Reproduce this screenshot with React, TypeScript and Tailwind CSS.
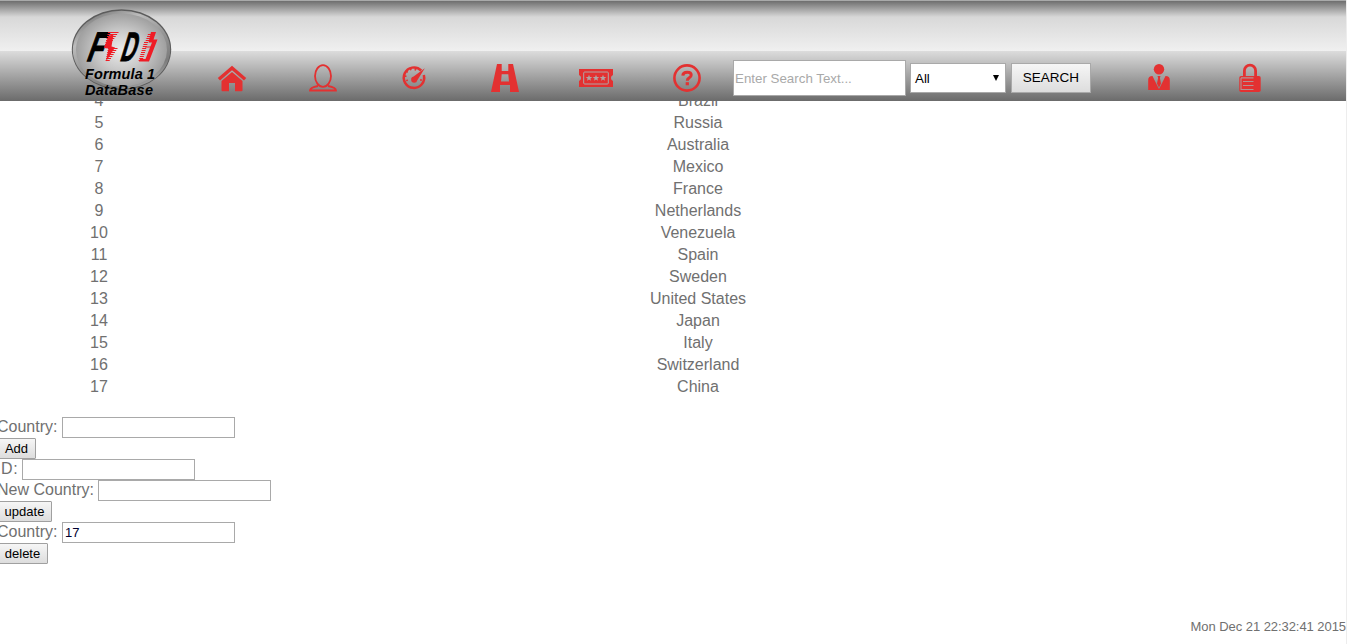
import React from "react";

const countries: [number, string][] = [
  [4, "Brazil"], [5, "Russia"], [6, "Australia"], [7, "Mexico"], [8, "France"],
  [9, "Netherlands"], [10, "Venezuela"], [11, "Spain"], [12, "Sweden"],
  [13, "United States"], [14, "Japan"], [15, "Italy"], [16, "Switzerland"], [17, "China"],
];

const redStripes = [0, 1, 2, 3, 4, 5, 6, 7, 8, 9, 10, 11, 12, 13, 14];

function Logo() {
  return (
    <svg width="102" height="101" viewBox="71 0 102 101" className="block shrink-0">
      <defs>
        <radialGradient id="face" cx="0.5" cy="0.5" r="0.52">
          <stop offset="0" stopColor="#ececec" />
          <stop offset="0.5" stopColor="#cacaca" />
          <stop offset="1" stopColor="#9c9c9c" />
        </radialGradient>
        <linearGradient id="rim" x1="0.2" y1="0" x2="0.8" y2="1">
          <stop offset="0" stopColor="#747474" />
          <stop offset="0.25" stopColor="#bcbcbc" />
          <stop offset="0.5" stopColor="#999" />
          <stop offset="0.8" stopColor="#7c7c7c" />
          <stop offset="1" stopColor="#b0b0b0" />
        </linearGradient>
      </defs>
      <ellipse cx="121.5" cy="49.5" rx="49.7" ry="40.2" fill="#5c5c5c" />
      <ellipse cx="121.5" cy="49.8" rx="48.7" ry="39" fill="url(#rim)" />
      <ellipse cx="121.5" cy="50" rx="45.5" ry="36.5" fill="url(#face)" />
      <g fontFamily="Liberation Sans, sans-serif" fontWeight="700" fill="#000">
        <text transform="translate(85.5 61.4) skewX(-20)" fontSize="41" textLength="15" lengthAdjust="spacingAndGlyphs" stroke="#000" strokeWidth="1.4">F</text>
        <text transform="translate(119 61.4) skewX(-17)" fontSize="41" textLength="15" lengthAdjust="spacingAndGlyphs" stroke="#000" strokeWidth="1">D</text>
        <text x="85" y="79" fontSize="14.5" fontStyle="italic" textLength="70">Formula 1</text>
        <text x="85" y="95" fontSize="14.5" fontStyle="italic" textLength="68">DataBase</text>
      </g>
      <g fill="#ef1c25">
        {redStripes.slice(0, 8).map((i) => (
          <rect key={i} x={108 - i * 0.5} y={32 + i * 2} width={10.5 - i * 0.9} height="1" />
        ))}
        {redStripes.slice(8).map((i) => (
          <rect key={i} x={108 - (i - 8) * 0.4} y={32 + i * 2} width={9.5 - (i - 8) * 0.9} height="1" />
        ))}
        <path d="M108.5 36 L113.5 34 L111.5 46.5 L115 47.5 L106 61.5 L108.5 48.5 L104 48 Z" />
        <path d="M151 32 H156 L153.5 39.5 H157.5 L149 61.5 H139 L140 59 H145.5 L152 42.5 H148.5 Z" />
        {redStripes.slice(1, 5).map((i) => (
          <rect key={i} x={148.5 - i * 0.7} y={32 + i * 2} width="5" height="1" />
        ))}
        {redStripes.slice(5).map((i) => (
          <rect key={i} x={147 - i * 0.6} y={32 + i * 2} width="4" height="1" />
        ))}
        <rect x="145" y="46.5" width="6" height="1" />
      </g>
    </svg>
  );
}

function Icon({ name }: { name: string }) {
  return (
    <svg width="36" height="30" viewBox="0 0 36 30" className="block" fill="#e33131">
      {name === "home" && (
        <>
          <path d="M3.8 15 L18 2.7 L32.2 15 L30 17.4 L18 7.2 L6 17.4 Z" />
          <path d="M7.5 18 L18 9 L28.5 18 V27.2 Q28.5 28.2 27.5 28.2 H21 V20 H15 V28.2 H8.5 Q7.5 28.2 7.5 27.2 Z" />
        </>
      )}
      {name === "person" && (
        <g fill="none" stroke="#e33131" strokeWidth="1.8">
          <ellipse cx="18" cy="13" rx="8" ry="10.8" />
          <path d="M13 23 Q5 24.5 5 27.5 H31 Q31 24.5 23 23" />
        </g>
      )}
      {name === "gauge" && (
        <g>
          <path d="M25.2 7.5 A10.2 10.2 0 1 0 27.8 12" fill="none" stroke="#e33131" strokeWidth="2.5" />
          <path d="M28.8 5.3 L21.3 17.2 A3.1 3.1 0 1 1 17.6 13.6 Z" />
          <g fill="none" stroke="#e33131" strokeWidth="1.6" strokeDasharray="1.6 2.8">
            <path d="M11.5 18 A7 7 0 0 1 21.8 8.5" />
          </g>
          <circle cx="25" cy="17" r="1" />
        </g>
      )}
      {name === "road" && (
        <path fillRule="evenodd" d="M10 1 H14.7 V8 H21.3 V1 H26 L32 29 H23 V22 H13 V29 H4 Z M14.7 11.3 L14 18.5 H22 L21.3 11.3 Z" />
      )}
      {name === "ticket" && (
        <>
          <path d="M1 6 H35 V12 A3.2 3.2 0 0 0 35 18 V24 H1 V18 A3.2 3.2 0 0 0 1 12 Z" />
          <rect x="5.7" y="9" width="24.6" height="12" rx="1" fill="none" stroke="#b1a5a5" strokeWidth="1" />
          {[11, 18, 25].map((x) => (
            <path key={x} transform={`translate(${x} 15)`} fill="#b1a5a5" d="M0-3.3 L.9-1.1 L3.3-1 L1.4.5 L2 2.8 L0 1.5 L-2 2.8 L-1.4.5 L-3.3-1 L-.9-1.1Z" />
          ))}
        </>
      )}
      {name === "help" && (
        <>
          <circle cx="18" cy="15" r="12.6" fill="none" stroke="#e33131" strokeWidth="2.6" />
          <path d="M13.8 12.7 Q14 9.2 18.2 9.2 Q22.2 9.2 22.2 12.1 Q22.2 13.8 20.2 14.8 Q18.3 15.8 18.3 17.8" fill="none" stroke="#e33131" strokeWidth="3" />
          <rect x="16.7" y="19.2" width="3.2" height="3.1" />
        </>
      )}
      {name === "user" && (
        <>
          <circle cx="18" cy="6.2" r="5.2" />
          <path d="M11.5 13 L17.4 25 L18 26 L18.6 25 L24.5 13 Q28.8 13 28.8 17 V27 H7.2 V17 Q7.2 13 11.5 13 Z" />
          <path d="M16.5 13 H19.5 L18.9 15 L20 20.5 L18 24.5 L16 20.5 L17.1 15 Z" />
        </>
      )}
      {name === "lock" && (
        <>
          <path d="M12.4 15 V7.7 A5.6 5.6 0 0 1 23.6 7.7 V15" fill="none" stroke="#e33131" strokeWidth="2.8" />
          <rect x="7.3" y="13" width="21.4" height="16" rx="1.8" />
          <path d="M9 14.9 H21.5 M11 18.5 H21.5 M11 22.5 H21.5 M9 26.5 H21.5 M9 15 V27" stroke="#b49292" strokeWidth="1.1" fill="none" />
        </>
      )}
    </svg>
  );
}

function FormField({ label, value = "", labelClass = "mr-1" }: { label: string; value?: string; labelClass?: string }) {
  return (
    <div className="flex h-[21px] items-start">
      <label className={`whitespace-pre leading-[19px] ${labelClass}`}>{label}</label>
      <input defaultValue={value} className="h-[21px] w-[173px] border border-[#a9a9a9] bg-white px-0.5 text-[13px] text-[#000030] outline-none" />
    </div>
  );
}

function FormButton({ children, className }: { children: string; className: string }) {
  return (
    <button className={`block h-[21px] rounded-[1px] border border-[#a0a0a0] bg-gradient-to-b from-[#f6f6f6] to-[#dddddd] text-[13px] leading-[18px] text-black ${className}`}>
      {children}
    </button>
  );
}

export default function App() {
  return (
    <div className="flex h-[644px] w-[1347px] flex-col overflow-hidden border-r border-[#ededed] bg-white font-['Liberation_Sans',Arial,sans-serif] text-base text-[#707070]">
      <header className="relative z-10 flex h-[101px] shrink-0 border-t border-[#a9aaaa] bg-[linear-gradient(to_bottom,#6e6e6e_0px,#d8d8d8_16px,#f0f0f0_50px,#dcdcdc_50px,#6b6b6b_100px)]">
        <div className="-mt-px ml-[71px] flex">
          <Logo />
        </div>
        <nav className="ml-[41px] mt-[62px] flex h-[30px] gap-[55px]">
          {["home", "person", "gauge", "road", "ticket", "help"].map((name) => (
            <a key={name}><Icon name={name} /></a>
          ))}
        </nav>
        <div className="ml-7 mt-[59px] flex items-start">
          <input placeholder="Enter Search Text..." className="h-9 w-[173px] border border-[#a9a9a9] bg-white px-px text-[13.33px] outline-none placeholder:text-[#a9a9a9]" />
          <div className="ml-1 mt-[3px] flex h-[30px] w-24 items-center justify-between border border-[#a9a9a9] bg-white pl-1 pr-[6px] text-[13.33px] text-black">
            <span className="mt-0.5">All</span>
            <svg width="6" height="6" viewBox="0 0 6 6"><path d="M0 0H6L3 6Z" /></svg>
          </div>
          <button className="ml-[5px] mt-[3px] h-[30px] w-20 border border-[#a9a9a9] bg-gradient-to-b from-[#f6f6f6] to-[#dddddd] text-[13.5px] text-black">SEARCH</button>
        </div>
        <div className="ml-[50px] mt-[62px] flex h-[30px] gap-[55px]">
          <Icon name="user" />
          <Icon name="lock" />
        </div>
      </header>
      <main className="-mt-[11px]">
        <div>
          {countries.map(([id, name]) => (
            <div key={id} className="grid h-[22px] grid-cols-[198px_1000px] text-center leading-[22px]">
              <span>{id}</span>
              <span>{name}</span>
            </div>
          ))}
        </div>
        <form className="-ml-[3px] mt-[19px]">
          <FormField label="Country:" labelClass="w-[65px]" />
          <FormButton className="w-[39px]">Add</FormButton>
          <FormField label="ID:" labelClass="w-[25px] -indent-px tracking-[0.6px]" />
          <FormField label="New Country:" labelClass="w-[101px]" />
          <FormButton className="w-[55px]">update</FormButton>
          <FormField label="Country:" value="17" labelClass="w-[65px]" />
          <FormButton className="w-[51px]">delete</FormButton>
        </form>
      </main>
      <footer className="mb-2 mt-auto text-right text-[13px] leading-[18px] tracking-[-0.06px]">Mon Dec 21 22:32:41 2015</footer>
    </div>
  );
}
